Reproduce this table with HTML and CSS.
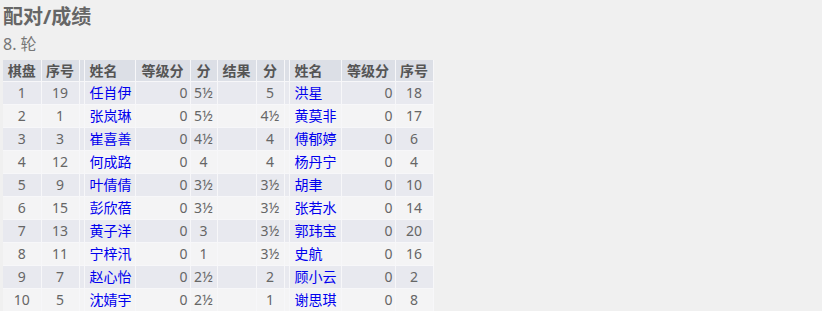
FILE: index.html
```html
<!DOCTYPE html>
<html lang="zh">
<head>
<meta charset="utf-8">
<title>配对/成绩</title>
<link rel="stylesheet" href="styles.css">
</head>
<body>
<h2 class="title">配对/成绩</h2>
<h3 class="round">8. 轮</h3>
<table class="pairs">
<colgroup>
<col class="c-board"><col class="c-no"><col class="c-gap"><col class="c-name"><col class="c-rating"><col class="c-pts"><col class="c-res"><col class="c-pts2"><col class="c-gap"><col class="c-name2"><col class="c-rating2"><col class="c-no">
</colgroup>
<thead>
<tr><th>棋盘</th><th>序号</th><th></th><th class="l">姓名</th><th>等级分</th><th>分</th><th>结果</th><th>分</th><th></th><th class="l">姓名</th><th>等级分</th><th>序号</th></tr>
</thead>
<tbody>
<tr><td>1</td><td>19</td><td></td><td class="n">任肖伊</td><td class="r">0</td><td>5½</td><td></td><td>5</td><td></td><td class="n">洪星</td><td class="r">0</td><td>18</td></tr>
<tr><td>2</td><td>1</td><td></td><td class="n">张岚琳</td><td class="r">0</td><td>5½</td><td></td><td>4½</td><td></td><td class="n">黄莫非</td><td class="r">0</td><td>17</td></tr>
<tr><td>3</td><td>3</td><td></td><td class="n">崔喜善</td><td class="r">0</td><td>4½</td><td></td><td>4</td><td></td><td class="n">傅郁婷</td><td class="r">0</td><td>6</td></tr>
<tr><td>4</td><td>12</td><td></td><td class="n">何成路</td><td class="r">0</td><td>4</td><td></td><td>4</td><td></td><td class="n">杨丹宁</td><td class="r">0</td><td>4</td></tr>
<tr><td>5</td><td>9</td><td></td><td class="n">叶倩倩</td><td class="r">0</td><td>3½</td><td></td><td>3½</td><td></td><td class="n">胡聿</td><td class="r">0</td><td>10</td></tr>
<tr><td>6</td><td>15</td><td></td><td class="n">彭欣蓓</td><td class="r">0</td><td>3½</td><td></td><td>3½</td><td></td><td class="n">张若水</td><td class="r">0</td><td>14</td></tr>
<tr><td>7</td><td>13</td><td></td><td class="n">黄子洋</td><td class="r">0</td><td>3</td><td></td><td>3½</td><td></td><td class="n">郭玮宝</td><td class="r">0</td><td>20</td></tr>
<tr><td>8</td><td>11</td><td></td><td class="n">宁梓汛</td><td class="r">0</td><td>1</td><td></td><td>3½</td><td></td><td class="n">史航</td><td class="r">0</td><td>16</td></tr>
<tr><td>9</td><td>7</td><td></td><td class="n">赵心怡</td><td class="r">0</td><td>2½</td><td></td><td>2</td><td></td><td class="n">顾小云</td><td class="r">0</td><td>2</td></tr>
<tr><td>10</td><td>5</td><td></td><td class="n">沈婧宇</td><td class="r">0</td><td>2½</td><td></td><td>1</td><td></td><td class="n">谢思琪</td><td class="r">0</td><td>8</td></tr>
</tbody>
</table>
</body>
</html>
```
FILE: styles.css
```css
html, body {
  margin: 0;
  padding: 0;
  background: #f0f0f0;
}
body {
  padding: 5px 3px 0 3px;
  font-family: "Noto Sans", "Noto Sans CJK SC", sans-serif;
  color: #666;
}
.title {
  margin: 0;
  font-size: 20px;
  line-height: 24px;
  font-weight: bold;
  color: #666;
}
.round {
  margin: 4px 0 5px 0;
  font-size: 16px;
  line-height: 22px;
  font-weight: normal;
  color: #777;
}
.pairs {
  border-collapse: collapse;
  table-layout: fixed;
  width: 430px;
  font-size: 14px;
}
.c-board { width: 38px; }
.c-no { width: 38px; }
.c-gap { width: 5px; }
.c-name { width: 51px; }
.c-rating { width: 55px; }
.c-pts { width: 27px; }
.c-res { width: 39px; }
.c-pts2 { width: 28px; }
.c-name2 { width: 52px; }
.c-rating2 { width: 54px; }
.pairs th, .pairs td {
  padding: 0;
  border-right: 1px solid #f7f7f9;
  border-bottom: 1px solid #f7f7f9;
  text-align: center;
  white-space: nowrap;
  overflow: hidden;
}
.pairs th {
  height: 21px;
  line-height: 21px;
  background: #dcdfe6;
  color: #555;
  font-weight: bold;
}
.pairs td {
  height: 22px;
  line-height: 22px;
  color: #666;
}
.pairs tbody tr:nth-child(odd) td { background: #e8e9ef; }
.pairs tbody tr:nth-child(even) td { background: #f4f4f5; }
.pairs th.l { text-align: left; padding-left: 5px; }
.pairs td.n { text-align: left; padding-left: 5px; color: #0000ee; }
.pairs td.r { text-align: right; padding-right: 2px; }
```
